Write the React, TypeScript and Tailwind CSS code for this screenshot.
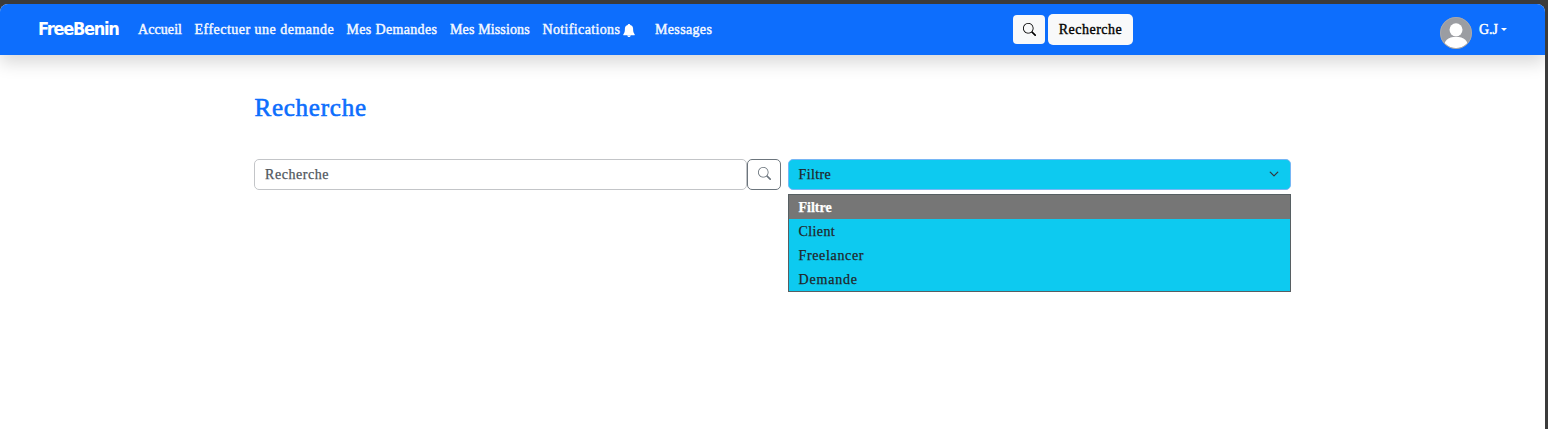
import React from 'react';

const links = [
  { label: 'Accueil', style: 'w-[56.5px] tracking-[0.08px]' },
  { label: 'Effectuer une demande', style: 'w-[152px] tracking-[0.48px]' },
  { label: 'Mes Demandes', style: 'w-[103.5px] tracking-[0.34px]' },
  { label: 'Mes Missions', style: 'w-[92.5px] tracking-[0.13px]' },
  { label: 'Notifications', style: 'w-[112.5px] tracking-[0.36px]', bell: true },
  { label: 'Messages', style: 'w-[60px] tracking-[0.35px]' },
];

const options = [
  { label: 'Client', style: 'tracking-[0.4px]' },
  { label: 'Freelancer', style: 'tracking-[0.65px]' },
  { label: 'Demande', style: 'tracking-[0.82px]' },
];

function SearchIcon({ className }: { className: string }) {
  return (
    <svg viewBox="0 0 16 16" fill="currentColor" className={className}>
      <path d="M11.742 10.344a6.5 6.5 0 1 0-1.397 1.398h-.001q.044.06.098.115l3.85 3.85a1 1 0 0 0 1.415-1.414l-3.85-3.85a1 1 0 0 0-.115-.1zM12 6.5a5.5 5.5 0 1 1-11 0 5.5 5.5 0 0 1 11 0" />
    </svg>
  );
}

function BellIcon() {
  return (
    <svg viewBox="0 0 12 13" fill="white" stroke="none" className="ml-[3px] h-[13px] w-[12px]">
      <path d="M6 0c-.7 0-1.200.4-1.200.9C2.900 1.300 1.900 2.800 1.900 4.600c0 2.800-.2 4.200-1.500 5.600-.4.500-.1 1 .5 1h10.200c.6 0 .9-.5.5-1-1.300-1.400-1.500-2.800-1.500-5.600 0-1.800-1-3.300-2.900-3.700C7.200.4 6.700 0 6 0zM4.200 11.500h3.600C7.700 12.400 7 13 6 13s-1.700-.6-1.800-1.500z" />
    </svg>
  );
}

function Avatar() {
  return (
    <svg viewBox="0 0 32 32" className="mt-[13px] h-8 w-8 shrink-0">
      <defs>
        <clipPath id="avatar">
          <circle cx="16" cy="16" r="15.2" />
        </clipPath>
      </defs>
      <circle cx="16" cy="16" r="16" fill="#9b9da2" />
      <g clipPath="url(#avatar)" fill="#fff">
        <circle cx="16" cy="12.8" r="6.5" />
        <path d="M3.500 32c0-8 4.500-12.200 12.500-12.200S28.500 24 28.500 32z" />
      </g>
      <circle cx="16" cy="16" r="15.6" fill="none" stroke="#a9abb0" strokeWidth=".8" />
    </svg>
  );
}

export default function App() {
  return (
    <div className="h-[429px] w-full overflow-hidden bg-[#3b3b3b] pr-[3px] pt-1 font-['Liberation_Serif',serif] text-[14px]">
      <div className="h-full overflow-hidden rounded-t-[8px] bg-white">
        <header className="flex h-[51px] items-start bg-[#0d6efd] pl-[38px] text-white shadow-[0_8px_16px_rgba(0,0,0,0.15)]">
          <div className="mt-[13px] w-[100px] whitespace-nowrap font-['DejaVu_Sans_Condensed','DejaVu_Sans',sans-serif] text-[18px] font-bold leading-6 tracking-[-1.25px]">
            FreeBenin
          </div>
          <nav className="mt-[15px] flex h-[22px] whitespace-nowrap leading-[22px] text-[#f4f8ff] [-webkit-text-stroke:0.45px]">
            {links.map((link) => (
              <a key={link.label} className={'flex items-center ' + link.style}>
                {link.label}
                {link.bell && <BellIcon />}
              </a>
            ))}
          </nav>
          <div className="ml-auto mr-[307px] flex items-center gap-[3px] pt-[10px] text-black">
            <button className="flex h-[29px] w-8 items-center justify-center rounded-[4px] bg-[#f8f9fa]">
              <SearchIcon className="h-[13px] w-[13px]" />
            </button>
            <button className="h-[31px] w-[85px] rounded-[5px] bg-[#f8f9fa] tracking-[0.5px] [-webkit-text-stroke:0.35px]">
              Recherche
            </button>
          </div>
          <div className="mr-[37px] flex w-[68px]">
            <Avatar />
            <span className="ml-[7px] mt-[15px] leading-[22px] [-webkit-text-stroke:0.45px]">G.J</span>
            <svg viewBox="0 0 6 3" className="ml-[3px] mt-6 h-[3px] w-[6px] shrink-0" fill="white">
              <path d="M0 0h6L3 3z" />
            </svg>
          </div>
        </header>
        <main className="pl-[254px] pt-[37px]">
          <h1 className="h-8 pl-[0.5px] text-[25px] leading-8 tracking-[0.75px] text-[#0d6efd] [-webkit-text-stroke:0.6px]">
            Recherche
          </h1>
          <div className="mt-[35px] flex items-start">
            <div className="flex h-[31px] w-[493px] items-center rounded-[5px] border border-[#c3c5c8] px-[10px] tracking-[0.55px] text-[#50565c] [-webkit-text-stroke:0.25px]">
              Recherche
            </div>
            <button className="flex h-[31px] w-[34px] items-center justify-center rounded-[5px] border border-[#6c757d] pb-[2px] text-[#6c757d]">
              <SearchIcon className="h-[13px] w-[13px]" />
            </button>
            <div className="ml-[7px] w-[503px] text-[#212529] [-webkit-text-stroke:0.25px]">
              <div className="flex h-[31px] items-center justify-between rounded-[5px] border border-[#76b6f5] bg-[#0dcaf0] pl-[9.5px] pr-[11px] tracking-[0.4px]">
                Filtre
                <svg viewBox="0 0 16 16" fill="none" stroke="#343a40" strokeWidth="2" strokeLinecap="round" strokeLinejoin="round" className="mb-[2px] h-[10px] w-[10px]">
                  <path d="m2 5 6 6 6-6" />
                </svg>
              </div>
              <div className="mt-1 h-[98px] border border-[#575f62] bg-[#0dcaf0]">
                <div className="h-6 bg-[#767676] pl-[9.5px] font-bold leading-[26px] text-white">Filtre</div>
                {options.map((option) => (
                  <div key={option.label} className={'h-6 pl-[9.5px] leading-[26px] ' + option.style}>
                    {option.label}
                  </div>
                ))}
              </div>
            </div>
          </div>
        </main>
      </div>
    </div>
  );
}
